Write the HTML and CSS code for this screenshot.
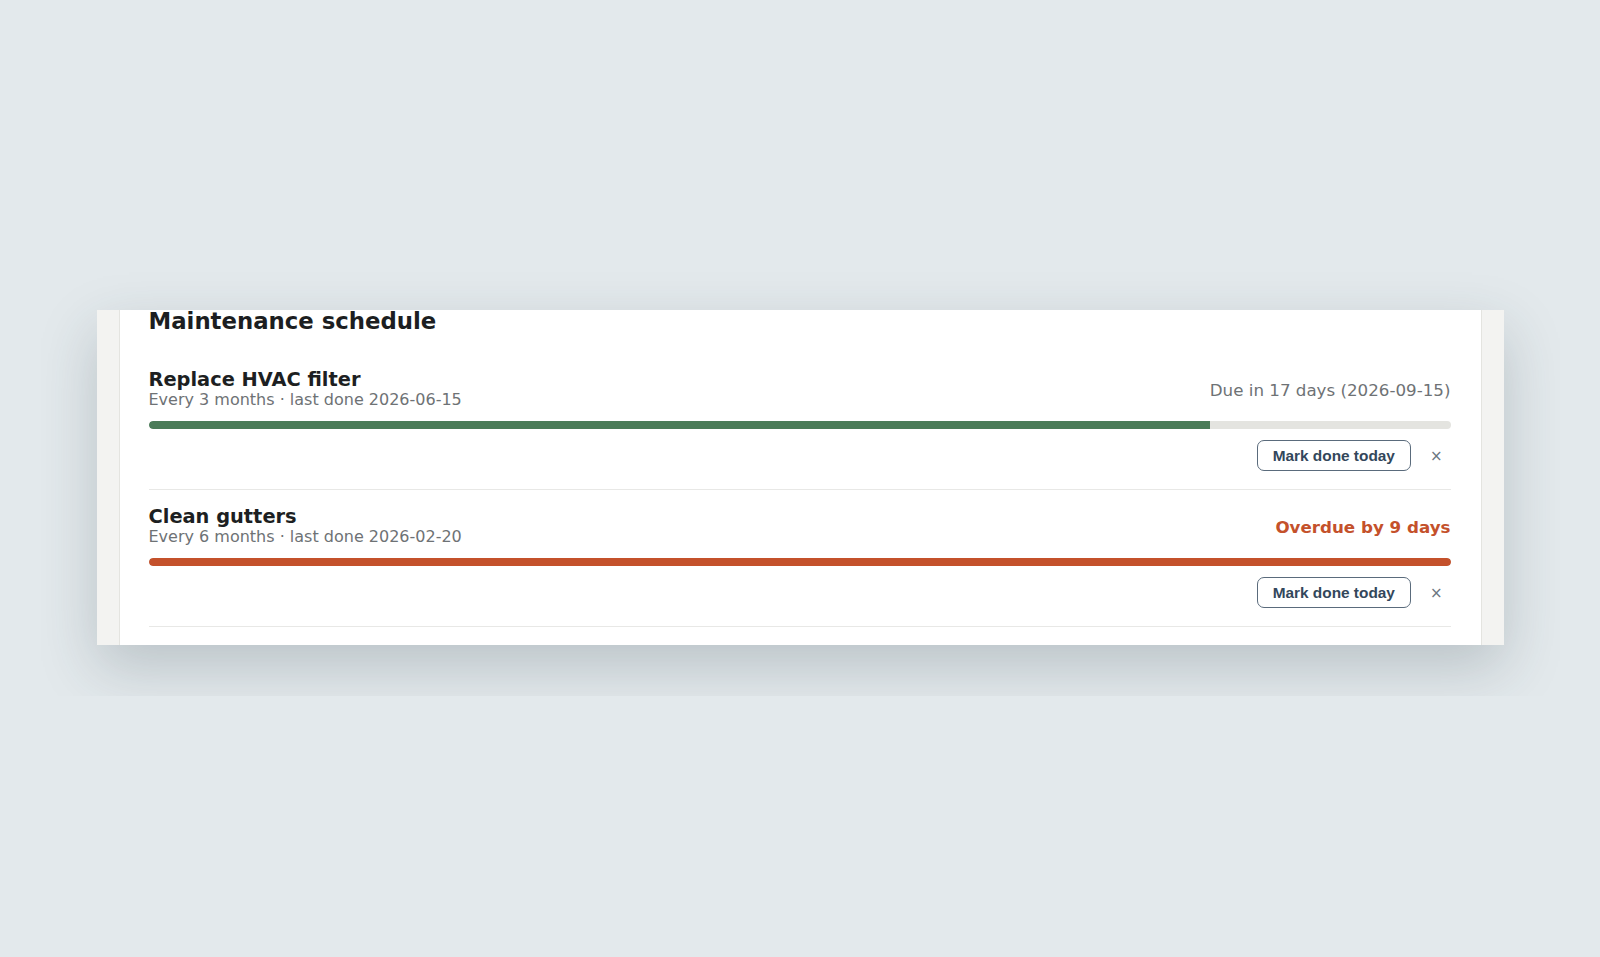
FILE: index.html
```html
<!DOCTYPE html>
<html>
<head>
<meta charset="utf-8">
<link rel="stylesheet" href="styles.css">
</head>
<body>
<div class="stage">
  <div class="card">
    <div class="panel">
      <h2 class="heading">Maintenance schedule</h2>
      <div class="item">
        <div class="item-head">
          <div class="item-text">
            <div class="item-title">Replace HVAC filter</div>
            <div class="item-sub">Every 3 months · last done 2026-06-15</div>
          </div>
          <div class="due">Due in 17 days (2026-09-15)</div>
        </div>
        <div class="bar"><div class="fill fill-ok" style="width:81.5%"></div></div>
        <div class="actions">
          <button class="btn">Mark done today</button>
          <button class="remove">×</button>
        </div>
      </div>
      <div class="item">
        <div class="item-head">
          <div class="item-text">
            <div class="item-title">Clean gutters</div>
            <div class="item-sub">Every 6 months · last done 2026-02-20</div>
          </div>
          <div class="due due-over">Overdue by 9 days</div>
        </div>
        <div class="bar"><div class="fill fill-over" style="width:100%"></div></div>
        <div class="actions">
          <button class="btn">Mark done today</button>
          <button class="remove">×</button>
        </div>
      </div>
    </div>
  </div>
</div>
</body>
</html>
```
FILE: styles.css
```css
html, body {
  margin: 0;
  padding: 0;
  background: #e3e9ec;
}
body {
  font-family: "DejaVu Sans", sans-serif;
  padding-top: 250px;
}
.stage {
  width: 1519px;
  margin: 0 auto;
  padding: 60px 56px 51px;
  box-sizing: border-box;
  overflow: hidden;
}
.card {
  background: #f3f3f1;
  padding: 0 22px;
  box-shadow: 0 22px 55px rgba(40, 60, 70, 0.22);
}
.panel {
  background: #ffffff;
  border-left: 1px solid #e4e4e0;
  border-right: 1px solid #e4e4e0;
  padding: 0 30px 18px 29px;
}
.heading {
  margin: 0;
  font-size: 22.8px;
  line-height: 22px;
  font-weight: bold;
  color: #1c1e21;
  padding-bottom: 21px;
}
.item {
  padding: 17px 0 18px;
  border-bottom: 1px solid #e8e8e6;
}
.item-head {
  display: flex;
  align-items: center;
  justify-content: space-between;
}
.item-title {
  font-size: 19.4px;
  line-height: 20px;
  font-weight: bold;
  color: #1d1f22;
}
.item-sub {
  font-size: 16px;
  line-height: 19px;
  color: #6e7275;
}
.due {
  font-size: 16.7px;
  color: #6e7275;
}
.due-over {
  color: #c4512b;
  font-weight: bold;
}
.bar {
  margin-top: 12px;
  height: 8px;
  border-radius: 4px;
  background: #e4e4e0;
  overflow: hidden;
}
.fill {
  height: 100%;
  border-radius: 4px 0 0 4px;
}
.fill-ok { background: #4a7b58; }
.fill-over { background: #c4512b; border-radius: 4px; }
.actions {
  margin-top: 11px;
  display: flex;
  justify-content: flex-end;
  align-items: center;
  gap: 11px;
}
.btn {
  font-family: "Liberation Sans", Arial, sans-serif;
  font-size: 15.4px;
  font-weight: bold;
  color: #33475b;
  background: #ffffff;
  border: 1.5px solid #5a6b7c;
  border-radius: 7px;
  height: 31px;
  padding: 0 15px;
}
.remove {
  font-family: "DejaVu Sans", sans-serif;
  font-size: 15px;
  color: #6b7580;
  background: none;
  border: none;
  padding: 2px 8px;
}
```
